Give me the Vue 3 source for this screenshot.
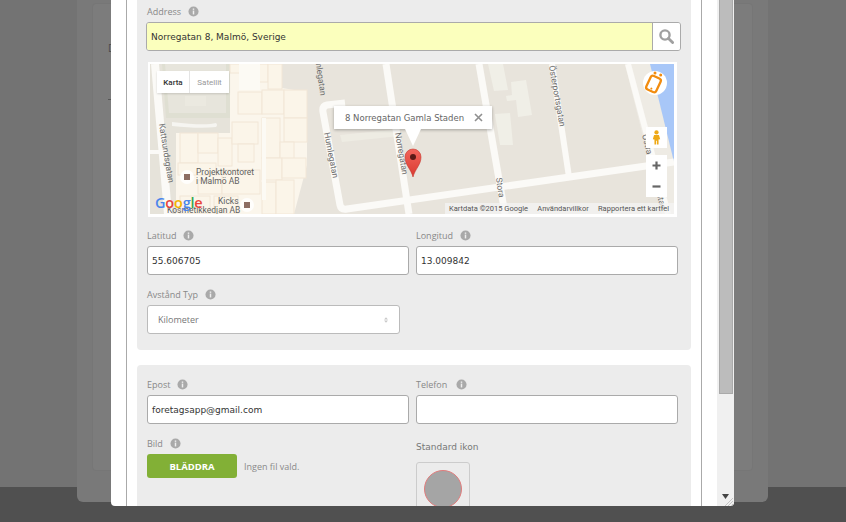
<script setup>
const blocks = [
  [230,64,20,9],[250,64,18,18],[268,64,14,25],[238,92,24,22],[262,90,22,24],[284,90,23,28],[284,118,23,24],
  [180,133,18,30],[198,133,20,20],[218,138,14,28],[232,122,26,22],[238,144,16,18],[262,118,18,40],[280,142,14,18],
  [178,163,38,12],[262,158,20,22],[282,158,24,20],[198,180,24,14],[222,170,38,24],[262,182,14,32],[276,180,18,34],[180,196,30,18],[214,196,24,18]
]
</script>

<template>
  <div class="screen">
    <div class="back-window">
      <div class="back-inner">
        <span class="back-letter">D</span>
        <span class="back-rule"></span>
      </div>
    </div>

    <div class="modal">
      <div class="frame">
        <section class="panel panel-address">
          <div class="label"><span>Address</span><svg class="info" viewBox="0 0 12 12"><circle cx="6" cy="6" r="5.5" fill="#a9a9a9"/><rect x="5.2" y="5" width="1.6" height="4.2" fill="#eee"/><rect x="5.2" y="2.7" width="1.6" height="1.5" fill="#eee"/></svg></div>
          <div class="address-row">
            <div class="address-input">Norregatan 8, Malmö, Sverige</div>
            <div class="search-btn">
              <svg width="15" height="15" viewBox="0 0 15 15"><circle cx="6" cy="6" r="4.6" fill="none" stroke="#a0a0a0" stroke-width="2.4"/><path d="M9.500 9.500 13.600 13.600" stroke="#a0a0a0" stroke-width="2.800" stroke-linecap="round"/></svg>
            </div>
          </div>

          <div class="map">
            <svg class="map-art" viewBox="150 64 524 150" width="524" height="150">
              <rect x="150" y="64" width="524" height="150" fill="#e8e4dc"/>
              <path d="M625 64H674V214H662Z" fill="#eeebe4"/>
              <path d="M650 64H674V162Z" fill="#a8c7f8"/>
              <path d="M150 64H230V133H176V214H150Z" fill="#e6e3da"/>
              <path d="M162 64H230V118H166Z" fill="#dfdfd2"/>
              <path d="M165 64H226V113H169Z" fill="#e7e5dc"/>
              <path d="M185 96H206V106H185Z" fill="#ebe9e0"/>
              <path d="M172 122Q205 126 216 123Q218 125 216 127Q200 129 172 126Z" fill="#f6f5f1"/>
              <path d="M230 64H282V88L307 92V165L294 214H176V133H230Z" fill="#fbf6ec"/>
              <rect v-for="(b, i) in blocks" :key="i" :x="b[0]" :y="b[1]" :width="b[2]" :height="b[3]" fill="#fbf5e9" stroke="#f2e6d6" stroke-width="1"/>
              <path d="M239 64H260V90H239ZM263 118H262V200H266V118Z" fill="#fcfaf4"/>
              <path d="M340 135 400 129V136L342 142Z" fill="#eeece3"/>
              <path d="M488 64H503L508 90 494 91ZM511 82 526 80 532 115 518 117 516 100 507 101 506 96 512 95ZM495 114 510 113 513 145 500 145Z" fill="#f0efe7"/>
              <g fill="none" stroke="#fbfaf7" stroke-linecap="butt">
                <path d="M155 64 168 214" stroke-width="8"/>
                <path d="M150 152H160" stroke-width="4"/>
                <path d="M345 103 327 105Q322 106 323 112L340 205Q341 210 347 209L674 162" stroke-width="7"/>
                <path d="M386 64 409 214" stroke-width="7"/>
                <path d="M479 64 505 214" stroke-width="7"/>
                <path d="M552 64 569 177" stroke-width="6"/>
                <path d="M628 64 668 214" stroke-width="6"/>
              </g>
              <g class="street">
                <text transform="translate(159 124) rotate(81)">Kattsundsgatan</text>
                <text transform="translate(314 50) rotate(82)">Humlegatan</text>
                <text transform="translate(324 133) rotate(79)">Humlegatan</text>
                <text transform="translate(395 133) rotate(80)">Norregatan</text>
                <text transform="translate(496 178) rotate(82)">Stora</text>
                <text transform="translate(549 66) rotate(80)">Österportsgatan</text>
                <text transform="translate(642 135) rotate(76)">Östra Förstadsgatan</text>
              </g>
              <g class="poi">
                <text x="196" y="175">Projektkontoret</text>
                <text x="196" y="184">i Malmö AB</text>
                <text x="218" y="204">Kicks</text>
                <text x="167" y="213">Kosmetikkedjan AB</text>
              </g>
              <circle cx="187" cy="177" r="7" fill="#fff" opacity=".85"/>
              <rect x="184" y="174" width="6" height="6" fill="#8d6e63"/>
              <circle cx="247" cy="205" r="7" fill="#fff" opacity=".85"/>
              <rect x="244" y="202" width="6" height="6" fill="#8d6e63"/>
              <text class="google" x="155" y="208"><tspan fill="#4a85ec">G</tspan><tspan fill="#e8453c">o</tspan><tspan fill="#f4b400">o</tspan><tspan fill="#4a85ec">g</tspan><tspan fill="#34a853">l</tspan><tspan fill="#e8453c">e</tspan></text>
              <defs>
                <linearGradient id="pin" x1="0" y1="0" x2="0" y2="1"><stop offset="0" stop-color="#f2655c"/><stop offset="1" stop-color="#d93a30"/></linearGradient>
              </defs>
              <path d="M413 177C411 169 405 165 405 157A8 8 0 0 1 421 157C421 165 415 169 413 177Z" fill="url(#pin)" stroke="#c8372f" stroke-width=".6"/>
              <circle cx="413" cy="157" r="3" fill="#5a1a17"/>
            </svg>

            <div class="map-type"><span class="on">Karta</span><span>Satellit</span></div>

            <div class="bubble">
              <span>8 Norregatan Gamla Staden</span>
              <svg width="9" height="9" viewBox="0 0 9 9"><path d="M1 1 8 8M8 1 1 8" stroke="#8f8f8f" stroke-width="1.6"/></svg>
            </div>

            <div class="round-btn">
              <svg width="24" height="24" viewBox="0 0 24 24"><g transform="rotate(25 10.500 13)"><rect x="5" y="5.500" width="11" height="15" rx="2.500" fill="none" stroke="#f28c0f" stroke-width="2.300"/><circle cx="10.500" cy="18" r="1" fill="#f28c0f"/></g><circle cx="12" cy="2" r="1.500" fill="#f28c0f"/><circle cx="17.700" cy="4" r="1.500" fill="#f28c0f"/></svg>
            </div>
            <div class="peg">
              <svg width="9" height="15" viewBox="0 0 11 18"><circle cx="5.500" cy="2.800" r="2.600" fill="#eea916"/><path d="M2.500 6H8.500L10 11 8 11.500V17.500H6V13H5V17.500H3V11.500L1 11Z" fill="#eea916"/></svg>
            </div>
            <div class="zoom-ctl">
              <svg width="21" height="21" viewBox="0 0 21 21"><path d="M6.500 10.500H14.500M10.500 6.500V14.500" stroke="#666" stroke-width="2.200"/></svg>
              <svg width="21" height="21" viewBox="0 0 21 21"><path d="M6.500 10.500H14.500" stroke="#666" stroke-width="2.200"/></svg>
            </div>
            <div class="attribution"><span>Kartdata ©2015 Google</span><span>Användarvillkor</span><span>Rapportera ett kartfel</span></div>
          </div>

          <div class="grid coords">
            <div class="field">
              <div class="label"><span>Latitud</span><svg class="info" viewBox="0 0 12 12"><circle cx="6" cy="6" r="5.5" fill="#a9a9a9"/><rect x="5.2" y="5" width="1.6" height="4.2" fill="#eee"/><rect x="5.2" y="2.7" width="1.6" height="1.5" fill="#eee"/></svg></div>
              <div class="input">55.606705</div>
            </div>
            <div class="field">
              <div class="label"><span>Longitud</span><svg class="info" viewBox="0 0 12 12"><circle cx="6" cy="6" r="5.5" fill="#a9a9a9"/><rect x="5.2" y="5" width="1.6" height="4.2" fill="#eee"/><rect x="5.2" y="2.7" width="1.6" height="1.5" fill="#eee"/></svg></div>
              <div class="input">13.009842</div>
            </div>
            <div class="field">
              <div class="label"><span>Avstånd Typ</span><svg class="info" viewBox="0 0 12 12"><circle cx="6" cy="6" r="5.5" fill="#a9a9a9"/><rect x="5.2" y="5" width="1.6" height="4.2" fill="#eee"/><rect x="5.2" y="2.7" width="1.6" height="1.5" fill="#eee"/></svg></div>
              <div class="select">
                <span>Kilometer</span>
                <svg width="4" height="6" viewBox="0 0 5 7"><path d="M2.500 0 5 3H0ZM0 4H5L2.500 7Z" fill="#c8c8c8"/></svg>
              </div>
            </div>
          </div>
        </section>

        <section class="panel panel-contact">
          <div class="grid">
            <div class="field">
              <div class="label"><span>Epost</span><svg class="info" viewBox="0 0 12 12"><circle cx="6" cy="6" r="5.5" fill="#a9a9a9"/><rect x="5.2" y="5" width="1.6" height="4.2" fill="#eee"/><rect x="5.2" y="2.7" width="1.6" height="1.5" fill="#eee"/></svg></div>
              <div class="input">foretagsapp@gmail.com</div>
            </div>
            <div class="field">
              <div class="label wide-gap"><span>Telefon</span><svg class="info" viewBox="0 0 12 12"><circle cx="6" cy="6" r="5.5" fill="#a9a9a9"/><rect x="5.2" y="5" width="1.6" height="4.2" fill="#eee"/><rect x="5.2" y="2.7" width="1.6" height="1.5" fill="#eee"/></svg></div>
              <div class="input"></div>
            </div>
            <div class="field">
              <div class="label"><span>Bild</span><svg class="info" viewBox="0 0 12 12"><circle cx="6" cy="6" r="5.5" fill="#a9a9a9"/><rect x="5.2" y="5" width="1.6" height="4.2" fill="#eee"/><rect x="5.2" y="2.7" width="1.6" height="1.5" fill="#eee"/></svg></div>
              <div class="file-row">
                <button class="browse" type="button">BLÄDDRA</button>
                <span class="no-file">Ingen fil vald.</span>
              </div>
            </div>
            <div class="field icon-field">
              <div class="std-label">Standard ikon</div>
              <div class="icon-box"><span class="icon-dot"></span></div>
            </div>
          </div>
        </section>
      </div>
      <div class="gutter"></div>
      <div class="scrollbar">
        <div class="thumb"></div>
        <svg class="arrow" width="7" height="5" viewBox="0 0 7 5"><path d="M0 0H7L3.500 5Z" fill="#444"/></svg>
        <svg class="grip" width="9" height="9" viewBox="0 0 9 9"><path d="M9 1 1 9M9 4 4 9M9 7 7 9" stroke="#c4c4c4" stroke-width="1"/></svg>
      </div>
    </div>
  </div>
</template>

<style>
html, body { margin: 0; background: #505050; }
</style>

<style scoped>
.screen {
  position: relative;
  width: 846px;
  height: 522px;
  overflow: hidden;
  background: linear-gradient(#737373 487px, #505050 487px);
  font-family: "Open Sans", "Liberation Sans", sans-serif;
}
.back-window {
  position: absolute;
  left: 77px;
  top: -10px;
  width: 691px;
  height: 512px;
  box-sizing: border-box;
  padding: 13px 15px 31px;
  background: #797979;
  border-radius: 0 0 6px 6px;
}
.back-inner {
  position: relative;
  height: 100%;
  box-sizing: border-box;
  background: #7c7c7c;
  border: 1px solid #767676;
  border-radius: 4px;
}
.back-letter {
  position: absolute;
  left: 15px;
  top: 37px;
  font-size: 10px;
  color: #4a4a4a;
}
.back-rule {
  position: absolute;
  left: 15px;
  top: 95px;
  width: 4px;
  height: 1px;
  background: #555;
}
.modal {
  position: absolute;
  left: 111px;
  top: 0;
  width: 623px;
  height: 506px;
  display: flex;
  padding-left: 15px;
  box-sizing: border-box;
  overflow: hidden;
  background: #fff;
  border-radius: 0 0 4px 4px;
}
.frame {
  width: 576px;
  flex: none;
  box-sizing: border-box;
  padding: 0 10px;
  border-left: 1px solid #aaa;
  border-right: 1px solid #aaa;
}
.gutter { width: 15px; flex: none; }
.scrollbar {
  position: relative;
  flex: 1;
  background: #f0f0f0;
}
.thumb {
  margin-left: 2px;
  width: 14px;
  height: 394px;
  box-sizing: border-box;
  background: #bcbcbc;
  border: 1px solid #aaa;
  border-top: 0;
}
.arrow { position: absolute; left: 5px; top: 494px; }
.grip { position: absolute; right: 1px; bottom: 0; }
.panel {
  background: #ececec;
  padding-left: 10px;
  padding-right: 13px;
  border-radius: 4px;
}
.panel-address {
  padding-top: 5px;
  padding-bottom: 16px;
  border-radius: 0 0 4px 4px;
  margin-bottom: 15px;
}
.panel-contact { padding-top: 13px; height: 160px; }
.label {
  display: flex;
  align-items: center;
  gap: 7px;
  height: 13px;
  font-size: 9px;
  color: #888;
}
.wide-gap { gap: 9px; }
.info { width: 11px; height: 11px; flex: none; }
.address-row {
  display: flex;
  height: 29px;
  margin: 4px -3px 11px -1px;
  box-sizing: border-box;
  border: 1px solid #aaa;
  border-radius: 3px;
  overflow: hidden;
}
.address-input {
  flex: 1;
  background: #fbffbd;
  display: flex;
  align-items: center;
  padding-left: 4px;
  font-family: "DejaVu Sans", sans-serif;
  font-size: 9px;
  color: #333;
}
.search-btn {
  width: 27px;
  background: #fff;
  border-left: 1px solid #aaa;
  display: flex;
  align-items: center;
  justify-content: center;
}
.map {
  position: relative;
  width: 524px;
  height: 150px;
  margin-left: 1px;
  border: 2px solid #fff;
  border-right-width: 3px;
  border-bottom-width: 3px;
  overflow: hidden;
  font-family: Roboto, "Liberation Sans", sans-serif;
}
.map-art { display: block; }
.street text { font: 8.500px Roboto, "Liberation Sans", sans-serif; fill: #6b6b6b; }
.poi text { font: 8.500px Roboto, "Liberation Sans", sans-serif; fill: #5f5f5f; }
.google { font: 600 14.500px "Open Sans", sans-serif; letter-spacing: -.2px; }
.map-type {
  position: absolute;
  left: 7px;
  top: 7px;
  display: flex;
  height: 22px;
  background: #fff;
  font-size: 8px;
  color: #999;
  box-shadow: 0 1px 2px rgba(0,0,0,.15);
}
.map-type span {
  display: flex;
  align-items: center;
  justify-content: center;
  width: 39px;
}
.map-type .on {
  width: 32px;
  color: #333;
  font-weight: 500;
  border-right: 1px solid #e4e4e4;
}
.bubble {
  position: absolute;
  left: 184px;
  top: 42px;
  width: 158px;
  height: 23px;
  box-sizing: border-box;
  padding: 0 9px 0 11px;
  display: flex;
  align-items: center;
  justify-content: space-between;
  background: #fff;
  font-family: "DejaVu Sans", sans-serif;
  font-size: 8.500px;
  color: #666;
  box-shadow: 0 1px 3px rgba(0,0,0,.3);
}
.bubble::after {
  content: "";
  position: absolute;
  left: 71px;
  top: 23px;
  border-left: 8px solid transparent;
  border-right: 8px solid transparent;
  border-top: 17px solid #fff;
}
.round-btn {
  position: absolute;
  left: 493px;
  top: 7px;
  width: 24px;
  height: 24px;
  border-radius: 50%;
  background: #fff;
}
.round-btn svg { overflow: visible; }
.peg {
  position: absolute;
  left: 496px;
  top: 63px;
  width: 21px;
  height: 21px;
  background: #fff;
  display: flex;
  align-items: center;
  justify-content: center;
}
.zoom-ctl {
  position: absolute;
  left: 496px;
  top: 91px;
  width: 21px;
  height: 42px;
  background: #fff;
  display: flex;
  flex-direction: column;
}
.attribution {
  position: absolute;
  right: 0;
  bottom: 0;
  width: 229px;
  height: 11px;
  box-sizing: border-box;
  padding: 0 5px 0 4px;
  display: flex;
  justify-content: space-between;
  align-items: center;
  background: rgba(245,245,245,.7);
  font-size: 7.500px;
  color: #555;
  white-space: nowrap;
}
.grid {
  display: grid;
  grid-template-columns: 262px 262px;
  column-gap: 7px;
  row-gap: 13px;
}
.coords { margin-top: 12px; }
.field { display: flex; flex-direction: column; gap: 4px; }
.input {
  height: 29px;
  box-sizing: border-box;
  border: 1px solid #aaa;
  border-radius: 3px;
  background: #fff;
  display: flex;
  align-items: center;
  padding-left: 4px;
  font-family: "DejaVu Sans", sans-serif;
  font-size: 9px;
  color: #333;
}
.select {
  width: 253px;
  height: 29px;
  box-sizing: border-box;
  border: 1px solid #bbb;
  border-radius: 3px;
  background: #fff;
  display: flex;
  align-items: center;
  justify-content: space-between;
  padding: 0 11px 0 10px;
  font-size: 9px;
  color: #777;
}
.file-row { display: flex; align-items: center; gap: 7px; }
.browse {
  width: 90px;
  height: 24px;
  padding: 0;
  border: 0;
  border-radius: 3px;
  background: #82b036;
  color: #fff;
  font: 700 9.500px "Open Sans", sans-serif;
}
.no-file { font-size: 9px; color: #8a8a8a; margin-top: 1px; }
.icon-field { padding-top: 4px; gap: 8px; }
.std-label {
  height: 13px;
  line-height: 13px;
  font-family: "DejaVu Sans", sans-serif;
  font-size: 9px;
  color: #777;
}
.icon-box {
  width: 54px;
  height: 54px;
  box-sizing: border-box;
  border: 1px solid #ccc;
  border-radius: 3px;
  display: flex;
  align-items: center;
  justify-content: center;
}
.icon-dot {
  width: 38px;
  height: 38px;
  box-sizing: border-box;
  border-radius: 50%;
  background: #a5a5a5;
  border: 1px solid #e07c7c;
}
</style>
